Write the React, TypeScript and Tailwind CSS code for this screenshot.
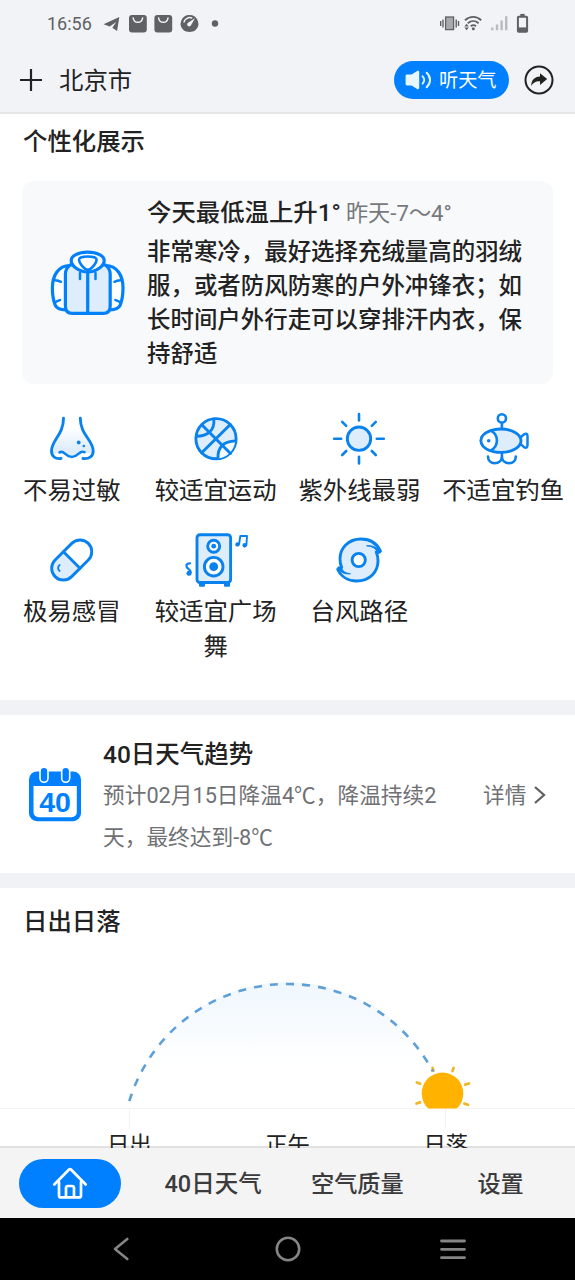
import type { ReactNode } from 'react';

const BLUE = '#0a82ee';
const PALE = '#deedfb';

function StatusBar() {
  return (
    <div className="flex h-12 items-center justify-between pr-[44px] pl-[47px] text-[#606164]">
      <div className="flex items-center">
        <span className="w-[56px] text-[18px] leading-[24px]">16:56</span>
        <svg width="120" height="24" viewBox="103 12 120 24" fill="currentColor">
          <path d="M103.5 24.2 119.3 17l-2.2 14-4.8-3.2 4-5.8-6.6 4.4z" />
          <rect x="129" y="15" width="17.8" height="17.4" rx="3" />
          <rect x="154.4" y="15" width="17.8" height="17.4" rx="3" />
          <path
            d="M133.2 18c.8 5.8 8.6 5.8 9.4 0M158.6 18c.8 5.8 8.6 5.8 9.4 0"
            fill="none"
            stroke="#f1f3f7"
            strokeWidth="1.5"
            strokeLinecap="round"
          />
          <path d="M189.5 15a8.8 8.8 0 0 1 5.6 15.6c-2 1.9-9.2 1.9-11.2 0A8.8 8.8 0 0 1 189.5 15z" />
          <path d="M183.8 22.5a6 6 0 0 1 8.5-4.3" fill="none" stroke="#f1f3f7" strokeWidth="1.4" />
          <path d="M195 18.2 191 25.2a2 2 0 1 1-3-2.4z" fill="#f1f3f7" />
          <circle cx="215" cy="23.5" r="3.2" />
        </svg>
      </div>
      <svg width="92" height="24" viewBox="439 12 92 24" fill="none" stroke="currentColor">
        <rect x="445.6" y="17" width="8" height="12.6" fill="#a8a9ab" strokeWidth="1.3" />
        <path d="M443 19.5v8M440.7 21v5M456.2 19.5v8M458.5 21v5" strokeWidth="1.4" />
        <path
          d="M465 20.2c4.8-4.4 11.6-4.4 16.2 0M467.8 23.2c3.2-2.8 7.6-2.8 10.8 0M470.8 26.2c1.6-1.3 3.6-1.3 5.2 0"
          strokeWidth="1.9"
        />
        <circle cx="473.3" cy="28.8" r="1.5" fill="currentColor" stroke="none" />
        <path d="m466.6 23.8 2.2 2.6h-4.4zM466.6 30.2l2.2-2.6h-4.4z" fill="currentColor" stroke="none" />
        <path d="M492.3 27.6V30.3M497 24.5v5.8M501.6 20.5v9.8M506.2 16.2v14.1" stroke="#babbbe" strokeWidth="2.4" />
        <rect x="517.9" y="16.8" width="9.2" height="15" rx=".8" strokeWidth="2" />
        <path d="M520.3 15h4.4" strokeWidth="2.2" />
        <path d="M518 27.4h9v4h-9z" fill="currentColor" stroke="none" />
      </svg>
    </div>
  );
}

function Header() {
  return (
    <div className="flex h-16 items-center pr-[21px] pl-5">
      <svg width="22" height="22" viewBox="0 0 22 22" stroke="#222" strokeWidth="2.2">
        <path d="M0 11h22M11 0v22" />
      </svg>
      <span className="ml-[17px] pt-0.5 text-[24.4px] leading-[32px]">北京市</span>
      <button className="ml-auto flex h-[38px] w-[115px] items-center rounded-full bg-[#007fff] pl-[11px] text-white">
        <svg width="28" height="22" viewBox="0 0 28 22">
          <path
            d="M2 5.5h4.5L12.2 2c1.2-.6 2 0 2 1.2v15.6c0 1.2-.8 1.8-2 1.2L6.5 16.5H2c-.8 0-1.4-.6-1.4-1.4V6.9c0-.8.6-1.4 1.4-1.4z"
            fill="#e8f6ff"
          />
          <path
            d="M17.6 7.4c2 2 2 5.2 0 7.2M21.6 3.8c4.6 4 4.6 10.4 0 14.4"
            fill="none"
            stroke="#e8f6ff"
            strokeWidth="2"
            strokeLinecap="round"
          />
        </svg>
        <span className="ml-[6px] pt-0.5 text-[19.2px] leading-[26px] whitespace-nowrap">听天气</span>
      </button>
      <svg className="ml-[15px]" width="30" height="30" viewBox="0 0 30 30">
        <circle cx="15" cy="15" r="13.5" fill="none" stroke="#222" strokeWidth="2" />
        <path d="M16 8.2 23.2 14 16 19.9v-3.6c-4-.3-6.6 1.2-8.8 4.6.2-5.6 3-9 8.8-9.4z" fill="#222" />
      </svg>
    </div>
  );
}

function JacketIcon() {
  return (
    <svg width="80" height="70" viewBox="0 0 80 70" fill="none" stroke="#0080fb" strokeWidth="3.2" strokeLinecap="round" strokeLinejoin="round">
      <path
        d="M22 17.5C10 17.5 4.4 28 4.4 40c0 7 .8 12.4 3 17.5 1.6 3.2 5 4.2 9.9 4.4M57.4 17.5c12 0 17.6 10.5 17.6 22.5 0 7-.8 12.4-3 17.5-1.6 3.2-5 4.2-9.9 4.4"
        fill="#fff"
      />
      <path d="M22 17c-3 2.5-4.6 4.5-4.6 9v32c0 4.8 2.4 7.4 7 7.4h30.8c4.6 0 7-2.6 7-7.4V26c0-4.5-1.6-6.5-4.6-9z" fill={PALE} />
      <path d="M39.7 4.2c-9.5 0-16.5 3.6-16.5 8.3 0 5.5 8 11.5 16.5 11.5s16.5-6 16.5-11.5c0-4.7-7-8.3-16.5-8.3z" fill="#fff" />
      <path d="M31 11.5c0-4 17.6-4 17.6 0 0 3.5-5.2 10.2-8.8 10.2S31 15 31 11.5z" strokeWidth="2.5" />
      <path d="M39.7 24v41" />
      <path
        d="M32 25v6M47.5 25v6M7 32.3c2 .2 4 .6 6 1.5M7.5 54c1.3-.8 2.8-1.5 4.5-1.9M72.4 32.3c-2 .2-4 .6-6 1.5M71.9 54c-1.3-.8-2.8-1.5-4.5-1.9"
        strokeWidth="2.5"
      />
    </svg>
  );
}

function Icon({ children }: { children: ReactNode }) {
  return (
    <svg
      className="overflow-visible"
      width="60"
      height="60"
      viewBox="0 0 60 60"
      fill="none"
      stroke={BLUE}
      strokeWidth="2.9"
      strokeLinecap="round"
      strokeLinejoin="round"
    >
      {children}
    </svg>
  );
}

const items: { label: string; icon: ReactNode }[] = [
  {
    label: '不易过敏',
    icon: (
      <>
        <defs>
          <linearGradient id="nose" x1="0" y1="0" x2="0" y2="1">
            <stop offset=".25" stopColor="#fff" />
            <stop offset=".8" stopColor={PALE} />
          </linearGradient>
        </defs>
        <path
          d="M21.5 9.3C21.5 25 9.5 31 9.5 42c0 2 2 4 7.5 1.4 5-3 5.2 5 12.8 5s8-8 13.2-5.2c4 2 8.2 1 8.2-1.2C51.2 31 38.3 25 38.3 9.3z"
          fill="url(#nose)"
          stroke="none"
        />
        <path d="M21.5 9.3C21.5 26 9.5 31 9.5 42c0 5.500 4 8.200 9.500 7.500M38.300 9.300C38.300 26 51.200 31 51.200 42c0 5.500-4.500 8.200-10.200 7.500" />
        <path d="M17.500 43.400c4.800-3 5.200 4.600 12.300 4.600s7.500-7.600 12.700-4.800" strokeWidth="2.500" />
        <circle cx="36.700" cy="33.500" r="1.900" fill={BLUE} stroke="none" />
        <circle cx="41.800" cy="37" r="1.300" fill={BLUE} stroke="none" />
      </>
    ),
  },
  {
    label: '较适宜运动',
    icon: (
      <>
        <circle cx="30" cy="29.7" r="20.1" fill={PALE} />
        <path d="M49.3 31.7C38 33 32 38 31.9 49.5c9-.8 16.5-8 17.4-17.8z" fill="#f3f9ff" stroke="none" />
        <path d="M16 16l28.5 28.5M44.3 15.5 15.7 43.8" />
        <path d="M27.8 10C29 21.5 21.5 27 10.5 27.2M49.5 31.9C38 32.4 31.5 38 32 49.5" />
      </>
    ),
  },
  {
    label: '紫外线最弱',
    icon: (
      <>
        <circle cx="30" cy="29.7" r="11.7" fill={PALE} />
        <path
          d="M30 5v6.5M30 47.9v6.5M5.2 29.7h7M47.8 29.7h7M13.2 12.9l4 4M46.8 12.9l-4 4M13.2 46l4-4M46.8 46l-4-4"
          strokeWidth="2.6"
        />
      </>
    ),
  },
  {
    label: '不适宜钓鱼',
    icon: (
      <>
        <path
          d="M47.5 28.500 51 25.300q3.500-1.800 3.500 2v8.800q0 3.800-3.500 2L47.500 34.900z"
          fill="#fff"
          strokeWidth="2.500"
        />
        <ellipse cx="28" cy="31.700" rx="20" ry="11.700" fill={PALE} />
        <path d="M17.600 21.700A20 11.700 0 0 0 17.600 41.700C26 37 26 26 17.600 21.700z" fill="#fff" strokeWidth="2.600" />
        <circle cx="15.700" cy="31.700" r="1.800" fill={BLUE} stroke="none" />
        <circle cx="28.900" cy="9.400" r="4.100" strokeWidth="2.600" />
        <path
          d="M28.900 14v6M28.900 44v3.500M15 47.600c0 4 2.800 6.600 6.600 6.600 4.300 0 7.300-2.600 7.300-7M42.800 47.600c0 4-2.800 6.600-6.600 6.600-4.300 0-7.300-2.600-7.300-7"
          strokeWidth="2.600"
        />
      </>
    ),
  },
  {
    label: '极易感冒',
    icon: (
      <>
        <g transform="rotate(-45 29.7 30)">
          <path d="M29.7 18.3H18a11.7 11.7 0 0 0 0 23.4h11.7z" fill={PALE} stroke="none" />
          <rect x="6.2" y="18.3" width="47" height="23.4" rx="11.7" />
          <path d="M29.7 18.3v23.4" />
        </g>
        <path d="M17.6 35c-2 1.5-2 4.5 0 6" strokeWidth="1.9" />
      </>
    ),
  },
  {
    label: '较适宜广场舞',
    icon: (
      <>
        <path d="M14 53h4v2.8h-4zM39 53h4v2.8h-4z" fill={BLUE} strokeWidth="2" />
        <rect x="11" y="4.7" width="33.6" height="47.8" rx="3" fill={PALE} />
        <circle cx="27.7" cy="16.2" r="6" fill="#fff" />
        <circle cx="27.7" cy="16.2" r="2.4" fill={BLUE} stroke="none" />
        <circle cx="27.7" cy="36.7" r="9.3" fill="#fff" />
        <circle cx="27.7" cy="36.7" r="4.4" fill={BLUE} stroke="none" />
        <path d="M53.1 14 54.3 6h6.7l-.6 9" strokeWidth="1.9" />
        <circle cx="51.5" cy="14.4" r="2.2" fill={BLUE} stroke="none" />
        <circle cx="58.7" cy="15.2" r="2.2" fill={BLUE} stroke="none" />
        <path d="M4.8 42.5C4.2 38 0 39 .4 35.3c.4-1.4 1.8-2 3.6-2" strokeWidth="2.2" />
        <circle cx="3" cy="43.2" r="2.5" fill={BLUE} stroke="none" />
      </>
    ),
  },
  {
    label: '台风路径',
    icon: (
      <>
        <path
          d="M51.5 21.2C47.5 12.500 40 9 32 9 19 9 11 18.500 11 29c0 3.600.7 6 1.700 8.500-2.200-.5-3.700.3-4 2C12 46.500 19 51 27.500 51 41 51 49 41.500 49 31c0-3.600-.7-6.500-1.800-9 2.200.8 3.600.6 4.300-.8z"
          fill={PALE}
        />
        <path
          d="M38 15.800c5 .4 8.500 2.400 10.200 6l3-.5c-2.500-3.700-7.500-6-13.200-5.500zM21 43.800c-4.500-.6-7.200-2.500-8.600-5.600l-3 .5c2 3.500 6.500 5.800 11.600 5.100z"
          fill={BLUE}
          strokeWidth="1"
        />
        <circle cx="29.700" cy="30" r="6.600" fill="#fff" />
      </>
    ),
  },
];

function PersonalSection() {
  return (
    <section className="h-[586px] shrink-0 bg-white">
      <h2 className="pt-3 pl-[23px] text-[24.4px] leading-[32px] font-medium">个性化展示</h2>
      <div className="mx-[22px] mt-[23px] flex h-[203px] rounded-xl bg-[#f8f9fb]">
        <div className="w-[125px] pt-[67px] pl-[26px]">
          <JacketIcon />
        </div>
        <div className="pt-3">
          <div className="mb-0.5 flex h-10 items-center whitespace-nowrap">
            <span className="text-[24.4px] font-medium">今天最低温上升1°</span>
            <span className="ml-[5px] pt-0.5 text-[22.2px] text-[#77787b]">昨天-7～4°</span>
          </div>
          <p className="w-[377px] text-[23.45px] leading-[34px] font-medium">
            非常寒冷，最好选择充绒量高的羽绒服，或者防风防寒的户外冲锋衣；如长时间户外行走可以穿排汗内衣，保持舒适
          </p>
        </div>
      </div>
      <div className="mt-[25px] grid grid-cols-4 gap-y-[22px]">
        {items.map(({ label, icon }) => (
          <div key={label} className="flex flex-col items-center gap-1">
            <Icon>{icon}</Icon>
            <span className="text-center text-[24.4px] leading-[35px]">{label}</span>
          </div>
        ))}
      </div>
    </section>
  );
}

function TrendSection() {
  return (
    <section className="flex h-[158px] shrink-0 bg-white">
      <svg className="mt-[51px] ml-7 shrink-0" width="54" height="57" viewBox="28 766 54 57">
        <rect x="29" y="771.5" width="52" height="49.7" rx="8" fill="#007fff" />
        <path d="M33.5 786h43.3v26.3a5 5 0 0 1-5 5H38.5a5 5 0 0 1-5-5z" fill="#fff" />
        <rect x="40" y="767.3" width="8" height="15" rx="4" fill="#007fff" stroke="#fff" strokeWidth="1.6" />
        <rect x="61.7" y="767.3" width="8" height="15" rx="4" fill="#007fff" stroke="#fff" strokeWidth="1.6" />
        <text
          x="55"
          y="811.7"
          textAnchor="middle"
          className="fill-[#007fff] font-['Liberation_Sans',sans-serif] text-[28.5px] font-bold"
        >
          40
        </text>
      </svg>
      <div className="ml-[21px] w-[360px] pt-[23px] whitespace-nowrap">
        <h2 className="text-[24.5px] leading-[34px] font-medium">40日天气趋势</h2>
        <p className="mt-[3px] text-[21.7px] leading-[42px] text-[#707174]">
          预计02月15日降温4℃，降温持续2
          <br />
          天，最终达到-8℃
        </p>
      </div>
      <div className="ml-[20px] flex h-[160px] items-center text-[21.7px] whitespace-nowrap text-[#707174]">
        <span className="pt-[3px]">详情</span>
        <svg className="ml-[7px]" width="13" height="20" viewBox="0 0 13 20" fill="none" stroke="#606164" strokeWidth="2.3">
          <path d="m2 2 9 8-9 8" />
        </svg>
      </div>
    </section>
  );
}

function SunSection() {
  return (
    <section className="h-[260px] shrink-0 overflow-hidden bg-[linear-gradient(to_bottom,#fff_258px,#e1e1e1_258px)]">
      <h2 className="pt-[18px] pl-[23px] text-[24.4px] leading-[32px] font-medium">日出日落</h2>
      <svg className="mt-[22px] block" width="575" height="169" viewBox="0 960 575 169">
        <defs>
          <linearGradient id="sky" gradientUnits="userSpaceOnUse" x1="0" y1="983" x2="0" y2="1065">
            <stop offset="0" stopColor="#eff7fe" />
            <stop offset="1" stopColor="#fff" />
          </linearGradient>
        </defs>
        <path d="M129.3 1101.4A165 165 0 0 1 446.3 1101.4z" fill="url(#sky)" />
        <path d="M0 1108.5h575M129.5 1109v19M445.5 1109v19" stroke="#f3f3f3" />
        <path d="M428.3 1108.6a20.8 20.8 0 1 1 28.4 0z" fill="#ffb300" />
        <path
          d="M432.6 1067.8l.9 3M453.6 1068l-1.1 3M416.8 1082.5l3.4 1.2M465.2 1084.6l3.8-1.1M416.5 1103.5l3.6-1.1M464.4 1103.6l3.6 1.2"
          stroke="#f2b722"
          strokeWidth="2.7"
          strokeLinecap="round"
        />
        <path d="M129.3 1101.2A165 165 0 0 1 432.9 1071.5" fill="none" stroke="#5f9fd8" strokeWidth="2.6" strokeDasharray="8 8.1" />
      </svg>
      <div className="flex justify-between px-[107px] text-[22.3px] leading-[32px]">
        <span>日出</span>
        <span>正午</span>
        <span>日落</span>
      </div>
    </section>
  );
}

function TabBar() {
  return (
    <nav className="grid h-[70px] shrink-0 grid-cols-4 items-center bg-[#f4f4f4] pr-1 text-center text-[23.2px] font-medium text-[#3b3b3d]">
      <button className="ml-[19px] flex h-[49px] w-[102px] items-center justify-center rounded-full bg-[#007fff]">
        <svg width="36" height="32" viewBox="0 0 36 32" fill="none" stroke="#fff" strokeWidth="2.7" strokeLinecap="round" strokeLinejoin="round">
          <path d="M2.3 17.5 16.8 2.800q1.200-1.200 2.400 0L33.700 17.500" />
          <path d="M7 15v13.400q0 2 2 2h18q2 0 2-2V15" />
          <path d="M14 30v-9q0-2 2-2h4q2 0 2 2v9" />
        </svg>
      </button>
      <span className="pt-[3px] pr-0.5 text-[23.5px]">40日天气</span>
      <span className="pt-0.5 pl-px">空气质量</span>
      <span className="pt-0.5 pl-0.5">设置</span>
    </nav>
  );
}

function SystemNav() {
  return (
    <div className="flex h-[62px] shrink-0 items-center justify-between bg-black pr-[109px] pl-[112px]">
      <svg width="18" height="26" viewBox="0 0 18 26" fill="none" stroke="#858585" strokeWidth="2.6" strokeLinecap="round" strokeLinejoin="round">
        <path d="M15.3 3 3 13l12.3 10" />
      </svg>
      <svg className="ml-[5px]" width="26" height="26" viewBox="0 0 26 26" fill="none" stroke="#858585" strokeWidth="2.6">
        <circle cx="13" cy="13" r="11.2" />
      </svg>
      <svg width="26" height="26" viewBox="0 0 26 26" fill="none" stroke="#858585" strokeWidth="2.8" strokeLinecap="round">
        <path d="M1.5 5h23M1.5 13.3h23M1.5 21.7h23" />
      </svg>
    </div>
  );
}

export default function App() {
  return (
    <div className="flex h-[1280px] w-[575px] flex-col overflow-hidden bg-[#f0f2f6] font-[Roboto,'Noto_Sans_CJK_SC',sans-serif] text-[#222]">
      <header className="h-[114px] shrink-0 border-b-2 border-[#e5e6e8] bg-[#f1f3f7]">
        <StatusBar />
        <Header />
      </header>
      <main className="flex h-[1034px] shrink-0 flex-col gap-[15px]">
        <PersonalSection />
        <TrendSection />
        <SunSection />
      </main>
      <TabBar />
      <SystemNav />
    </div>
  );
}
